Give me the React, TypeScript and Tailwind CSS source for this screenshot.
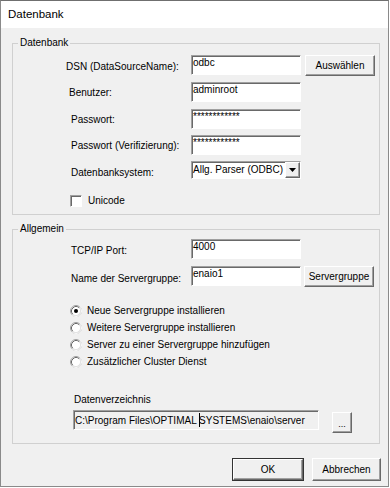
import React from "react";

const sunken =
  "border border-t-[#a0a0a0] border-l-[#a0a0a0] border-r-white border-b-white shadow-[inset_1px_1px_0_#696969]";
const raised =
  "border border-t-white border-l-white border-r-[#696969] border-b-[#696969] shadow-[inset_-1px_-1px_0_#a0a0a0] bg-[#f0f0f0] flex items-center justify-center";

function Input({ value, cls = "w-[110px] h-[20px]", bg = "bg-white" }: { value: string; cls?: string; bg?: string }) {
  return (
    <div className={`${cls} ${bg} ${sunken} pl-[1px] pt-[1px] leading-[12px] whitespace-nowrap overflow-hidden`}>{value}</div>
  );
}

function Radio({ checked }: { checked?: boolean }) {
  return (
    <svg width="12" height="12" viewBox="0 0 12 12" className="shrink-0">
      <circle cx="6" cy="6" r="5.5" fill="white" stroke="#a0a0a0" />
      <path d="M9.89 2.11 A5.5 5.5 0 0 1 2.11 9.89" fill="none" stroke="#ffffff" />
      <path d="M2.82 9.18 A4.5 4.5 0 0 1 9.18 2.82" fill="none" stroke="#696969" />
      <path d="M9.18 2.82 A4.5 4.5 0 0 1 2.82 9.18" fill="none" stroke="#e3e3e3" />
      {checked && <circle cx="6" cy="6" r="2" fill="#000" />}
    </svg>
  );
}

export default function App() {
  return (
    <div className="w-[390px] h-[488px] bg-white font-['Liberation_Sans',Arial,sans-serif] text-[10px] leading-[12px] text-black">
      <div className="w-[389px] h-[487px] border border-[#8a8a8a] border-t-[#6f6f6f] flex flex-col bg-[#f0f0f0]">
        <div className="h-[27px] bg-white pl-[7px] flex items-center text-[11.5px] leading-[14px] pb-[1px]">Datenbank</div>
        <div className="flex flex-col pl-[11px]">
          {/* Group 1 */}
          <fieldset className="mt-[9px] w-[368px] border border-[#d0d0d0]">
            <legend className="ml-[5px] px-[2px] leading-[12px]">Datenbank</legend>
            <div className="flex flex-col pt-[6px] pb-[7px]">
              <div className="flex h-[20px]">
                <div className="w-[178px] pl-[53px] pt-[6px] whitespace-nowrap">DSN (DataSourceName):</div>
                <Input value="odbc" />
                <div className={`ml-[4px] w-[70px] h-[21px] ${raised}`}>Auswählen</div>
              </div>
              <div className="flex h-[20px] mt-[7px]">
                <div className="w-[178px] pl-[56px] pt-[5px] whitespace-nowrap">Benutzer:</div>
                <Input value="adminroot" />
              </div>
              <div className="flex h-[20px] mt-[7px]">
                <div className="w-[178px] pl-[58px] pt-[5px] whitespace-nowrap">Passwort:</div>
                <Input value="************" />
              </div>
              <div className="flex h-[20px] mt-[6px]">
                <div className="w-[178px] pl-[58px] pt-[5px] whitespace-nowrap">Passwort (Verifizierung):</div>
                <Input value="************" />
              </div>
              <div className="flex h-[18px] mt-[6px]">
                <div className="w-[178px] pl-[58px] pt-[6px] whitespace-nowrap">Datenbanksystem:</div>
                <div className={`w-[110px] h-[18px] bg-white ${sunken} flex`}>
                  <div className="flex-1 pl-[1px] pt-[2px] leading-[12px] whitespace-nowrap overflow-hidden">Allg. Parser (ODBC)</div>
                  <div className={`w-[15px] h-full ${raised}`}>
                    <svg width="7" height="4" viewBox="0 0 7 4">
                      <path d="M0 0 H7 L3.5 4 Z" fill="#000" />
                    </svg>
                  </div>
                </div>
              </div>
              <div className="flex h-[12px] mt-[16px] items-center pl-[57px]">
                <div className={`w-[12px] h-[12px] bg-white ${sunken}`} />
                <div className="ml-[6px] leading-[12px]">Unicode</div>
              </div>
            </div>
          </fieldset>

          {/* Group 2 */}
          <fieldset className="mt-[8px] w-[368px] border border-[#d0d0d0]">
            <legend className="ml-[5px] px-[2px] leading-[12px]">Allgemein</legend>
            <div className="flex flex-col pt-[4px] pb-[10px]">
              <div className="flex h-[20px]">
                <div className="w-[178px] pl-[58px] pt-[6px] whitespace-nowrap">TCP/IP Port:</div>
                <Input value="4000" />
              </div>
              <div className="flex h-[20px] mt-[7px]">
                <div className="w-[178px] pl-[58px] pt-[7px] whitespace-nowrap">Name der Servergruppe:</div>
                <Input value="enaio1" />
                <div className={`ml-[3px] w-[70px] h-[21px] ${raised}`}>Servergruppe</div>
              </div>
              <div className="flex flex-col mt-[16px] pl-[57px]">
                {[
                  ["Neue Servergruppe installieren", true],
                  ["Weitere Servergruppe installieren", false],
                  ["Server zu einer Servergruppe hinzufügen", false],
                  ["Zusätzlicher Cluster Dienst", false],
                ].map(([t, c]) => (
                  <div key={t as string} className="flex items-center h-[17px]">
                    <Radio checked={c as boolean} />
                    <span className="ml-[5px] whitespace-nowrap">{t as string}</span>
                  </div>
                ))}
              </div>
              <div className="mt-[24px] pl-[61px] leading-[12px]">Datenverzeichnis</div>
              <div className="flex mt-[4px] pl-[60px] items-start">
                <div className={`w-[246px] h-[20px] bg-[#f0f0f0] ${sunken} pl-[1px] pt-[2px] leading-[12px] whitespace-nowrap overflow-hidden`}>
                  C:\Program Files\OPTIMAL <span className="inline-block w-[1px] h-[14px] bg-black align-[-3px] -mr-[1px]" />SYSTEMS\enaio\server
                </div>
                <div className={`ml-[13px] mt-[2px] w-[20px] h-[21px] ${raised} text-[9px] leading-[10px] pt-[3px]`}>...</div>
              </div>
            </div>
          </fieldset>

          <div className="flex justify-end pr-[7px] mt-[14px] gap-[8px]">
            <div className="w-[72px] h-[23px] border border-[#333] flex">
              <div className={`flex-1 ${raised}`}>OK</div>
            </div>
            <div className={`w-[69px] h-[23px] ${raised}`}>Abbrechen</div>
          </div>
        </div>
      </div>
    </div>
  );
}
